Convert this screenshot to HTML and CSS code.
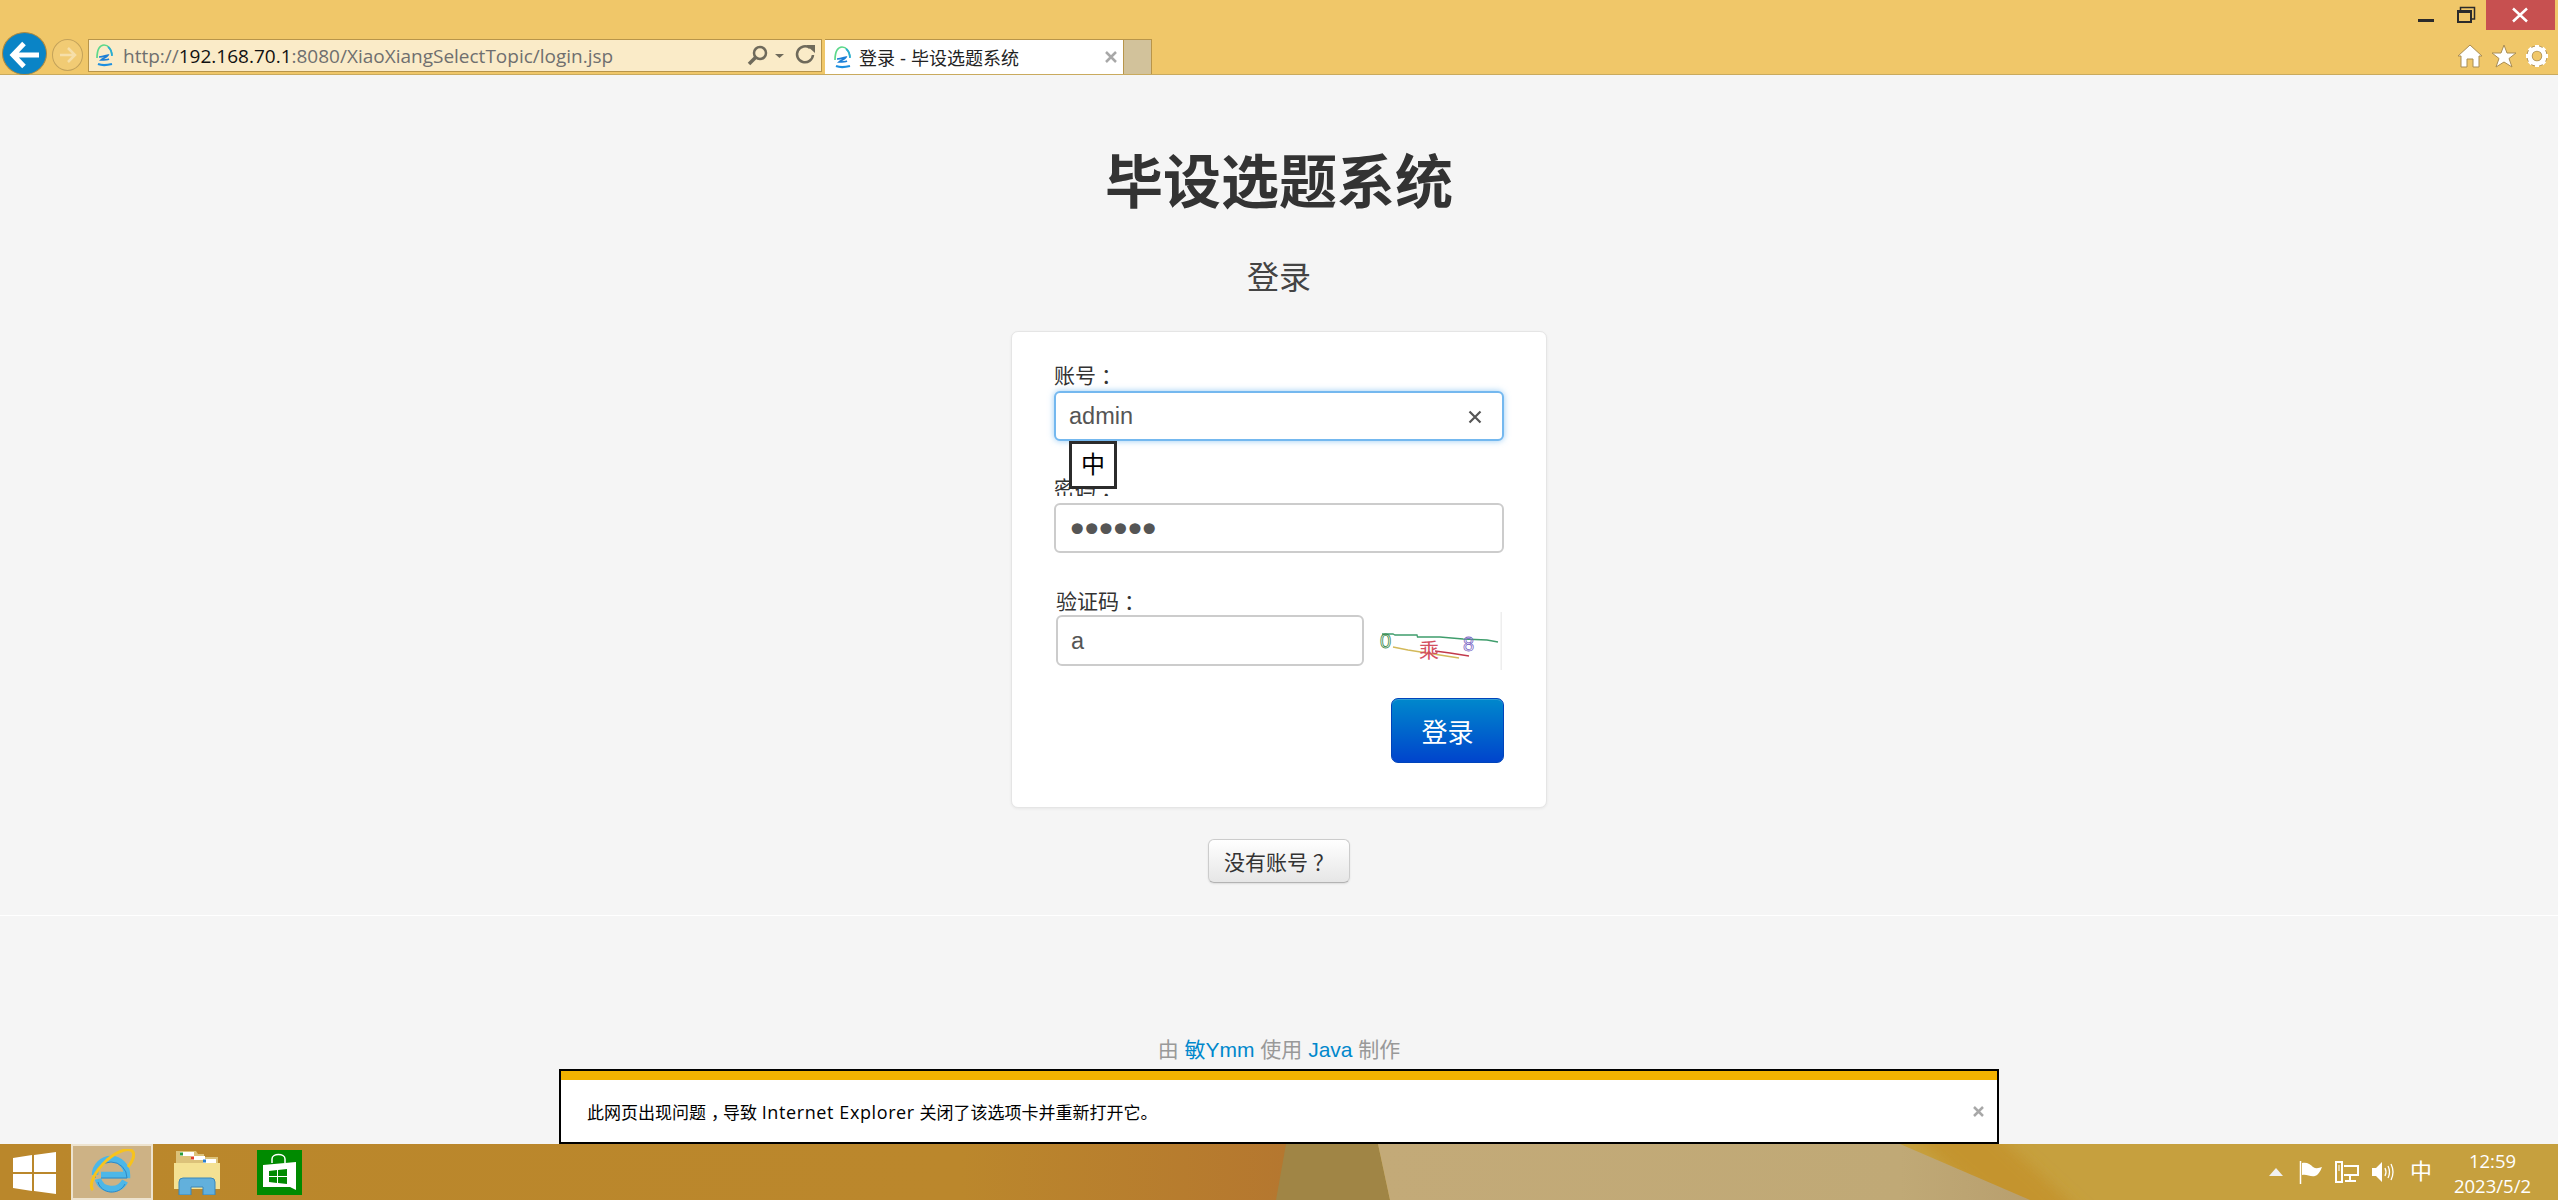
FILE: index.html
```html
<!DOCTYPE html>
<html lang="zh">
<head>
<meta charset="utf-8">
<title>登录 - 毕设选题系统</title>
<link rel="stylesheet" href="styles.css">
</head>
<body>
<header class="chrome">
  <div class="titlebar">
    <span class="winbtn"><svg width="40" height="30"><rect x="12" y="19" width="16" height="3" fill="#2b2b2b"/></svg></span>
    <span class="winbtn"><svg width="40" height="30" fill="none" stroke="#2b2b2b"><path d="M14.500 11V7.500H28.500V19H26" stroke-width="1.500"/><rect x="12" y="11" width="13" height="11" stroke-width="2"/><rect x="11" y="10" width="15" height="3" fill="#2b2b2b" stroke="none"/></svg></span>
    <span class="winbtn close"><svg width="69" height="30" stroke="#fff" stroke-width="2.500"><path d="M27 8.500L41 21.500M41 8.500L27 21.500"/></svg></span>
  </div>
  <div class="toolbar">
    <span class="back"><svg width="45" height="43" fill="none" stroke="#fff" stroke-width="5"><path d="M37 23H12M22 11.500L11 23L22 34.500"/></svg></span>
    <span class="forward"><svg width="29" height="30" fill="none" stroke="#f6dfa9" stroke-width="2.500"><path d="M7 15H21M15 8L22 15L15 22"/></svg></span>
    <div class="address">
      <svg class="fav" width="19" height="23" viewBox="0 0 19 23" fill="none" stroke-width="1.700"><path d="M2 14C2 5 5 1 9 1C13 1 16 5 17 11" stroke="#5cd88a"/><path d="M13 3C16 5 17 8 17 12" stroke="#29a9d8"/><path d="M4 13C8 13 12 11 13 11C12 13 7 15 6 16C9 16 12 16 14 15" stroke="#1c7fd6"/><path d="M3 20C8 22 13 21 17 20" stroke="#1c8fe0" stroke-width="2.200"/></svg>
      <span class="url">http://<b>192.168.70.1</b>:8080/XiaoXiangSelectTopic/login.jsp</span>
      <svg class="addr-tools" width="71" height="24" viewBox="0 0 71 24" fill="none" stroke="#6f6a5b"><circle cx="13" cy="9" r="6" stroke-width="2.500"/><path d="M9 13L2 20" stroke-width="3.500"/><path d="M28 10H37L32.500 14Z" fill="#6f6a5b" stroke="none"/><path d="M63 4A8 8 0 1 0 66 11" stroke-width="2.500"/><path d="M59 1H68V9Z" fill="#6f6a5b" stroke="none"/></svg>
    </div>
    <div class="tab">
      <svg class="fav" width="19" height="23" viewBox="0 0 19 23" fill="none" stroke-width="1.700"><path d="M2 14C2 5 5 1 9 1C13 1 16 5 17 11" stroke="#5cd88a"/><path d="M13 3C16 5 17 8 17 12" stroke="#29a9d8"/><path d="M4 13C8 13 12 11 13 11C12 13 7 15 6 16C9 16 12 16 14 15" stroke="#1c7fd6"/><path d="M3 20C8 22 13 21 17 20" stroke="#1c8fe0" stroke-width="2.200"/></svg>
      <span class="tab-title">登录 - 毕设选题系统</span>
      <svg class="tab-x" width="12" height="12" stroke="#a8a8a8" stroke-width="2.500"><path d="M1 1L11 11M11 1L1 11"/></svg>
    </div>
    <div class="newtab"></div>
    <div class="tools">
      <svg width="26" height="24" viewBox="0 0 26 24" fill="#fff" stroke="#a98d52"><path d="M1 12L13 1L25 12H22V23H16V15H10V23H4V12Z"/></svg>
      <svg width="26" height="24" viewBox="0 0 26 24" fill="#fff" stroke="#a98d52"><path d="M13 1L16 9H25L18 14.500L21 23L13 18L5 23L8 14.500L1 9H10Z"/></svg>
      <svg width="24" height="24" viewBox="0 0 24 24" fill="none"><circle cx="12" cy="12" r="7.500" stroke="#a98d52" stroke-width="6"/><circle cx="12" cy="12" r="7.500" stroke="#fff" stroke-width="4.500"/><path d="M12 1V23M1 12H23M4.200 4.200L19.800 19.800M19.800 4.200L4.200 19.800" stroke="#fff" stroke-width="4" stroke-dasharray="4 14"/></svg>
    </div>
  </div>
</header>

<main class="page">
  <h1 class="site-title">毕设选题系统</h1>
  <h2 class="subtitle">登录</h2>
  <form class="card">
    <label class="label">账号<span class="cen">：</span></label>
    <div class="field">
      <input class="input focus" type="text" value="admin">
      <svg class="clear" width="14" height="14" stroke="#555" stroke-width="2.200"><path d="M1.500 1.500L12.500 12.500M12.500 1.500L1.500 12.500"/></svg>
      <span class="ime">中</span>
    </div>
    <label class="label clip">密码<span class="cen">：</span></label>
    <input class="input pass" type="password" value="123456">
    <label class="label third">验证码<span class="cen">：</span></label>
    <div class="captcha-row">
      <input class="input short" type="text" value="a">
      <svg class="captcha" width="125" height="58" viewBox="0 0 125 58">
        <g fill="none" stroke-width="1.300">
          <path d="M4 22H15L17 23H39L39.500 25H62L85 27L109 28L120 30" stroke="#3f9d6c"/>
          <path d="M15 35L30 38L49 41L81 46" stroke="#d3b95a"/>
          <path d="M57 39L72 41L91 44" stroke="#c23a4c"/>
        </g>
        <text x="2" y="36" class="cap-0">0</text>
        <text x="85" y="39" class="cap-8">8</text>
        <text x="41" y="46" class="cap-x">乘</text>
        <rect x="122.500" y="0" width="1.500" height="58" fill="#eeeeee"/>
      </svg>
    </div>
    <div class="actions"><button class="primary" type="button">登录</button></div>
  </form>
  <button class="secondary" type="button">没有账号<span class="cen">？</span></button>
  <hr class="rule">
  <footer class="foot">由 <a>敏Ymm</a> 使用 <a>Java</a> 制作</footer>
  <aside class="notice">
    <div class="notice-bar"></div>
    <div class="notice-body">
      <span>此网页出现问题<span class="comma">，</span>导致 <span class="latin">Internet Explorer</span> 关闭了该选项卡并重新打开它。</span>
      <svg width="11" height="11" stroke="#a8a8a8" stroke-width="2.500"><path d="M1 1L10 10M10 1L1 10"/></svg>
    </div>
  </aside>
</main>

<footer class="taskbar">
  <svg class="wall" width="2558" height="56" viewBox="0 0 2558 56">
    <defs>
      <linearGradient id="warm" x1="0" x2="1" y1="0" y2="0"><stop offset="0" stop-color="#ba872b"/><stop offset="0.740" stop-color="#bb872c"/><stop offset="0.990" stop-color="#b5772f"/></linearGradient>
      <linearGradient id="fade" x1="0" x2="1" y1="0" y2="0"><stop offset="0" stop-color="#c3aa78"/><stop offset="0.800" stop-color="#c0a976"/><stop offset="1" stop-color="#b89f6e"/></linearGradient>
      <filter id="soft" x="-20%" y="-20%" width="140%" height="140%"><feGaussianBlur stdDeviation="7"/></filter>
    </defs>
    <rect width="2558" height="56" fill="#c6a03e"/>
    <rect width="1300" height="56" fill="url(#warm)"/>
    <path d="M1286 0H1378L1390 56H1276Z" fill="#a08545"/>
    <path d="M1900 -20H1985L2090 76H2010Z" fill="#c4942e" filter="url(#soft)"/>
    <path d="M1378 0H1900L2030 56H1390Z" fill="url(#fade)"/>
  </svg>
  <span class="start"><svg width="43" height="42" viewBox="0 0 43 42" fill="#fff"><path d="M0 6L19 3V20H0ZM21 3L43 0V20H21ZM0 22H19V39L0 36ZM21 22H43V42L21 39Z"/></svg></span>
  <span class="task active"><svg width="46" height="46" viewBox="0 0 46 46" fill="none"><path d="M6 26A16 16 0 0 1 38 26H12M36 32C30 44 12 42 9 30" stroke="#4cb7e8" stroke-width="6.500"/><path d="M6 26A16 16 0 0 1 38 26H12M36 32C30 44 12 42 9 30" stroke="#2f87c4" stroke-width="1" transform="translate(0 3)"/><path d="M4 41C-1 36 6 22 18 11C30 1 41 -2 44 3C46 7 43 13 39 18" stroke="#f7c31c" stroke-width="3"/></svg></span>
  <span class="task folder"><svg width="46" height="46" viewBox="0 0 46 46"><path d="M2 2H22L24 5H30V8H44V14H2Z" fill="#dcc27a"/><rect x="6" y="3" width="14" height="4" fill="#fff"/><rect x="6" y="3.500" width="3" height="3" fill="#2a9d3c"/><rect x="17" y="7" width="14" height="4" fill="#fff"/><rect x="17" y="7.500" width="3" height="3" fill="#e0402a"/><rect x="29" y="10" width="13" height="4" fill="#fff"/><rect x="29" y="10.500" width="3" height="3" fill="#2a7fd0"/><rect x="0" y="14" width="46" height="26" fill="#f4e193"/><path d="M5 39V33Q5 29 9 29H37Q41 29 41 33V46H29V38H17V46H5Z" fill="#62b0dc" stroke="#3a86b8"/></svg></span>
  <span class="task store"><svg width="45" height="45" viewBox="0 0 45 45"><rect width="45" height="45" fill="#008a00"/><path d="M15 13V9C15 3 28 3 28 9V13" fill="none" stroke="#fff" stroke-width="1.500"/><path d="M6 15L39 12V40L33 37H6Z" fill="#fff"/><path d="M12 21L20 20V26H12ZM21 20L30 19V26H21ZM12 27H20V33L12 32ZM21 27H30V34L21 33Z" fill="#008a00"/></svg></span>
  <div class="tray">
    <svg class="t-arrow" width="14" height="8"><path d="M0 8L7 0L14 8Z" fill="#f0f0f0"/></svg>
    <svg width="24" height="23" fill="#fff" stroke="#fff"><path d="M1.500 0V23" stroke-width="1.500"/><path d="M3 2C8 1 11 3 14 6C17 8 20 7 23 6C21 11 19 14 16 15C11 16 8 13 3 14Z" stroke="none"/></svg>
    <svg width="24" height="22" fill="none" stroke="#fff" stroke-width="2"><rect x="1" y="1" width="6" height="20"/><rect x="3.500" y="4" width="1" height="6" fill="#fff" stroke="none"/><path d="M9 5H23V14H9M15 14V20M10 20H21" /></svg>
    <svg width="24" height="22" fill="#fff"><path d="M1 7H5L11 1V21L5 15H1Z"/><g fill="none" stroke="#fff" stroke-width="1.300"><path d="M14 7Q16 11 14 15"/><path d="M17 5Q20 11 17 17"/><path d="M20 3Q24 11 20 19"/></g></svg>
    <span class="t-ime">中</span>
    <div class="clock"><span>12:59</span><span>2023/5/2</span></div>
  </div>
</footer>
</body>
</html>
```
FILE: styles.css
```css
* { box-sizing: border-box; }
html, body { margin: 0; height: 100%; }
body {
  width: 2558px;
  height: 1200px;
  overflow: hidden;
  display: flex;
  flex-direction: column;
  background: #f5f5f5;
  font-family: "Liberation Sans", "Noto Sans CJK SC", sans-serif;
  color: #333;
}

/* browser chrome */
.chrome {
  height: 75px;
  flex: none;
  background: #f0c769;
  border-bottom: 1px solid #c9aa5e;
}
.titlebar { height: 31px; display: flex; justify-content: flex-end; padding-right: 3px; }
.winbtn { display: block; height: 30px; width: 40px; }
.winbtn svg { display: block; }
.winbtn.close { width: 69px; background: #c75050; }
.toolbar { height: 43px; display: flex; align-items: flex-start; padding: 8px 9px 0 2px; }
.back {
  width: 45px; height: 43px; margin-top: -7px; border-radius: 50%;
  background: #0a84c6; border: 1px solid #b08a3e; flex: none; margin-right: 5px;
  position: relative; z-index: 1;
}
.back svg { display: block; margin: -1px; }
.forward {
  width: 31px; height: 32px; border-radius: 50%; background: rgba(255,255,255,.08);
  border: 1px solid #c3a25a; flex: none; margin-right: 5px;
}
.address {
  width: 734px; height: 33px; flex: none; background: #faebc8;
  border: 1px solid #b8954a; display: flex; align-items: center; padding-left: 6px;
}
.fav { flex: none; display: block; }
.url { margin-left: 9px; font: 19px "Open Sans", "Liberation Sans", sans-serif; color: #6f6f6f; white-space: nowrap; flex: 1; }
.url b { font-weight: 400; color: #111; }
.addr-tools { flex: none; margin-right: 3px; }
.tab {
  width: 298px; height: 35px; margin-left: 3px; flex: none; background: #fff;
  border-top: 1px solid #b8954a; display: flex; align-items: center; padding-left: 8px;
}
.tab-title { margin-left: 7px; font-size: 18px; color: #222; flex: 1; white-space: nowrap; }
.tab-x { margin-right: 6px; }
.newtab { width: 29px; height: 35px; flex: none; background: #d2c29b; border: 1px solid #b8954a; border-bottom: 0; }
.tools { margin-left: auto; display: flex; gap: 8px; padding-top: 5px; }
.tools svg { display: block; }

/* page */
.page { flex: 1; position: relative; text-align: center; }
.site-title { margin: 73px 0 0; font-size: 58px; line-height: 70px; font-weight: 700; color: #333; }
.subtitle { margin: 40px 0 0; font-size: 32px; line-height: 40px; font-weight: 400; color: #444; }
.card {
  width: 536px; margin: 33px auto 0; padding: 29px 42px 44px 42px; text-align: left;
  background: #fff; border: 1px solid #e5e5e5; border-radius: 7px;
  box-shadow: 0 1px 3px rgba(0,0,0,.06);
}
.cen { font-family: "Noto Sans CJK TC", sans-serif; margin-left: 5px; }
.label { display: block; height: 26px; line-height: 26px; margin-bottom: 4px; font-size: 21px; color: #333; white-space: nowrap; }
.label.clip { height: 22px; overflow: hidden; margin: 33px 0 7px; line-height: 26px; }
.label.third { margin: 34px 0 2px; padding-left: 2px; }
.field { position: relative; }
.input {
  display: block; width: 450px; height: 50px; padding: 1px 13px 0;
  font: 23.500px "Liberation Sans", sans-serif; color: #555;
  background: #fff; border: 2px solid #ccc; border-radius: 6px; outline: none;
}
.input.focus { border-color: #74b8ef; box-shadow: 0 0 6px rgba(82,168,236,.6); }
.input.pass { font-family: "DejaVu Sans", sans-serif; font-size: 38px; letter-spacing: -8px; padding: 3px 10px 0; }
.clear { position: absolute; right: 22px; top: 19px; }
.ime {
  position: absolute; left: 15px; top: 50px; width: 48px; height: 48px; z-index: 2;
  background: #fff; border: 3px solid #2b2b2b; color: #000;
  font-size: 24px; line-height: 42px; text-align: center;
}
.captcha-row { display: flex; align-items: center; padding-left: 2px; height: 51px; }
.input.short { width: 308px; height: 51px; }
.captcha { flex: none; margin-left: 14px; overflow: visible; }
.cap-0 { font: 20px "Liberation Sans", sans-serif; fill: none; stroke: #3c8a4e; stroke-width: .8; }
.cap-8 { font: 20px "Liberation Sans", sans-serif; fill: none; stroke: #7a66c4; stroke-width: .8; }
.cap-x { font: 20px "Noto Sans CJK SC", sans-serif; fill: #d3505f; }
.actions { display: flex; justify-content: flex-end; margin-top: 32px; }
.primary {
  width: 113px; height: 65px; border-radius: 7px; border: 1px solid #0044bb;
  background: linear-gradient(#0088cc, #0044cc); color: #fff; font: 26px "Liberation Sans", "Noto Sans CJK SC", sans-serif;
  box-shadow: inset 0 1px 0 rgba(255,255,255,.2);
}
.secondary {
  display: block; width: 142px; height: 44px; margin: 31px auto 0; padding: 0;
  border: 1px solid #ccc; border-bottom-color: #b3b3b3; border-radius: 6px;
  background: linear-gradient(#fff, #e6e6e6); color: #333;
  font: 21px "Liberation Sans", "Noto Sans CJK SC", sans-serif;
  box-shadow: 0 1px 2px rgba(0,0,0,.1);
}
.rule { height: 1px; margin: 32px 0 0; border: 0; background: #ffffff; }
.foot { padding-top: 121px; font-size: 21px; line-height: 26px; color: #999; }
.foot a { color: #0088cc; }
.notice {
  position: absolute; left: 559px; bottom: 0; width: 1440px; height: 75px;
  background: #fff; border: 2px solid #000; text-align: left;
}
.notice-bar { height: 9px; background: #f3b200; }
.notice-body {
  height: 62px; display: flex; align-items: center; justify-content: space-between;
  padding: 0 13px 0 26px; font-size: 17px; color: #000;
}
.comma { display: inline-block; width: 17px; padding-left: 5px; }
.latin { font-family: "Open Sans", "Liberation Sans", sans-serif; font-size: 18px; letter-spacing: .6px; }

/* taskbar */
.taskbar { height: 56px; flex: none; position: relative; display: flex; align-items: center; color: #fff; }
.wall { position: absolute; left: 0; top: 0; }
.start, .task, .tray { position: relative; }
.start { margin-left: 13px; margin-top: 1px; line-height: 0; }
.task { display: flex; align-items: center; justify-content: center; }
.task.active {
  width: 82px; height: 56px; margin-left: 15px; padding-top: 0;
  background: #cdb285; border: 2px solid #ede3cf;
}
.task.folder { margin-left: 21px; }
.task.store { margin-left: 37px; }
.tray { margin-left: auto; display: flex; align-items: center; gap: 12px; padding-right: 20px; }
.t-arrow { margin-right: 4px; }
.t-ime { font-size: 22px; line-height: 24px; margin-left: 3px; }
.clock {
  display: flex; flex-direction: column; align-items: center; margin-left: 3px; width: 91px; padding-top: 2px;
  font: 400 18.500px/25px "Open Sans", "Liberation Sans", sans-serif;
}
```
